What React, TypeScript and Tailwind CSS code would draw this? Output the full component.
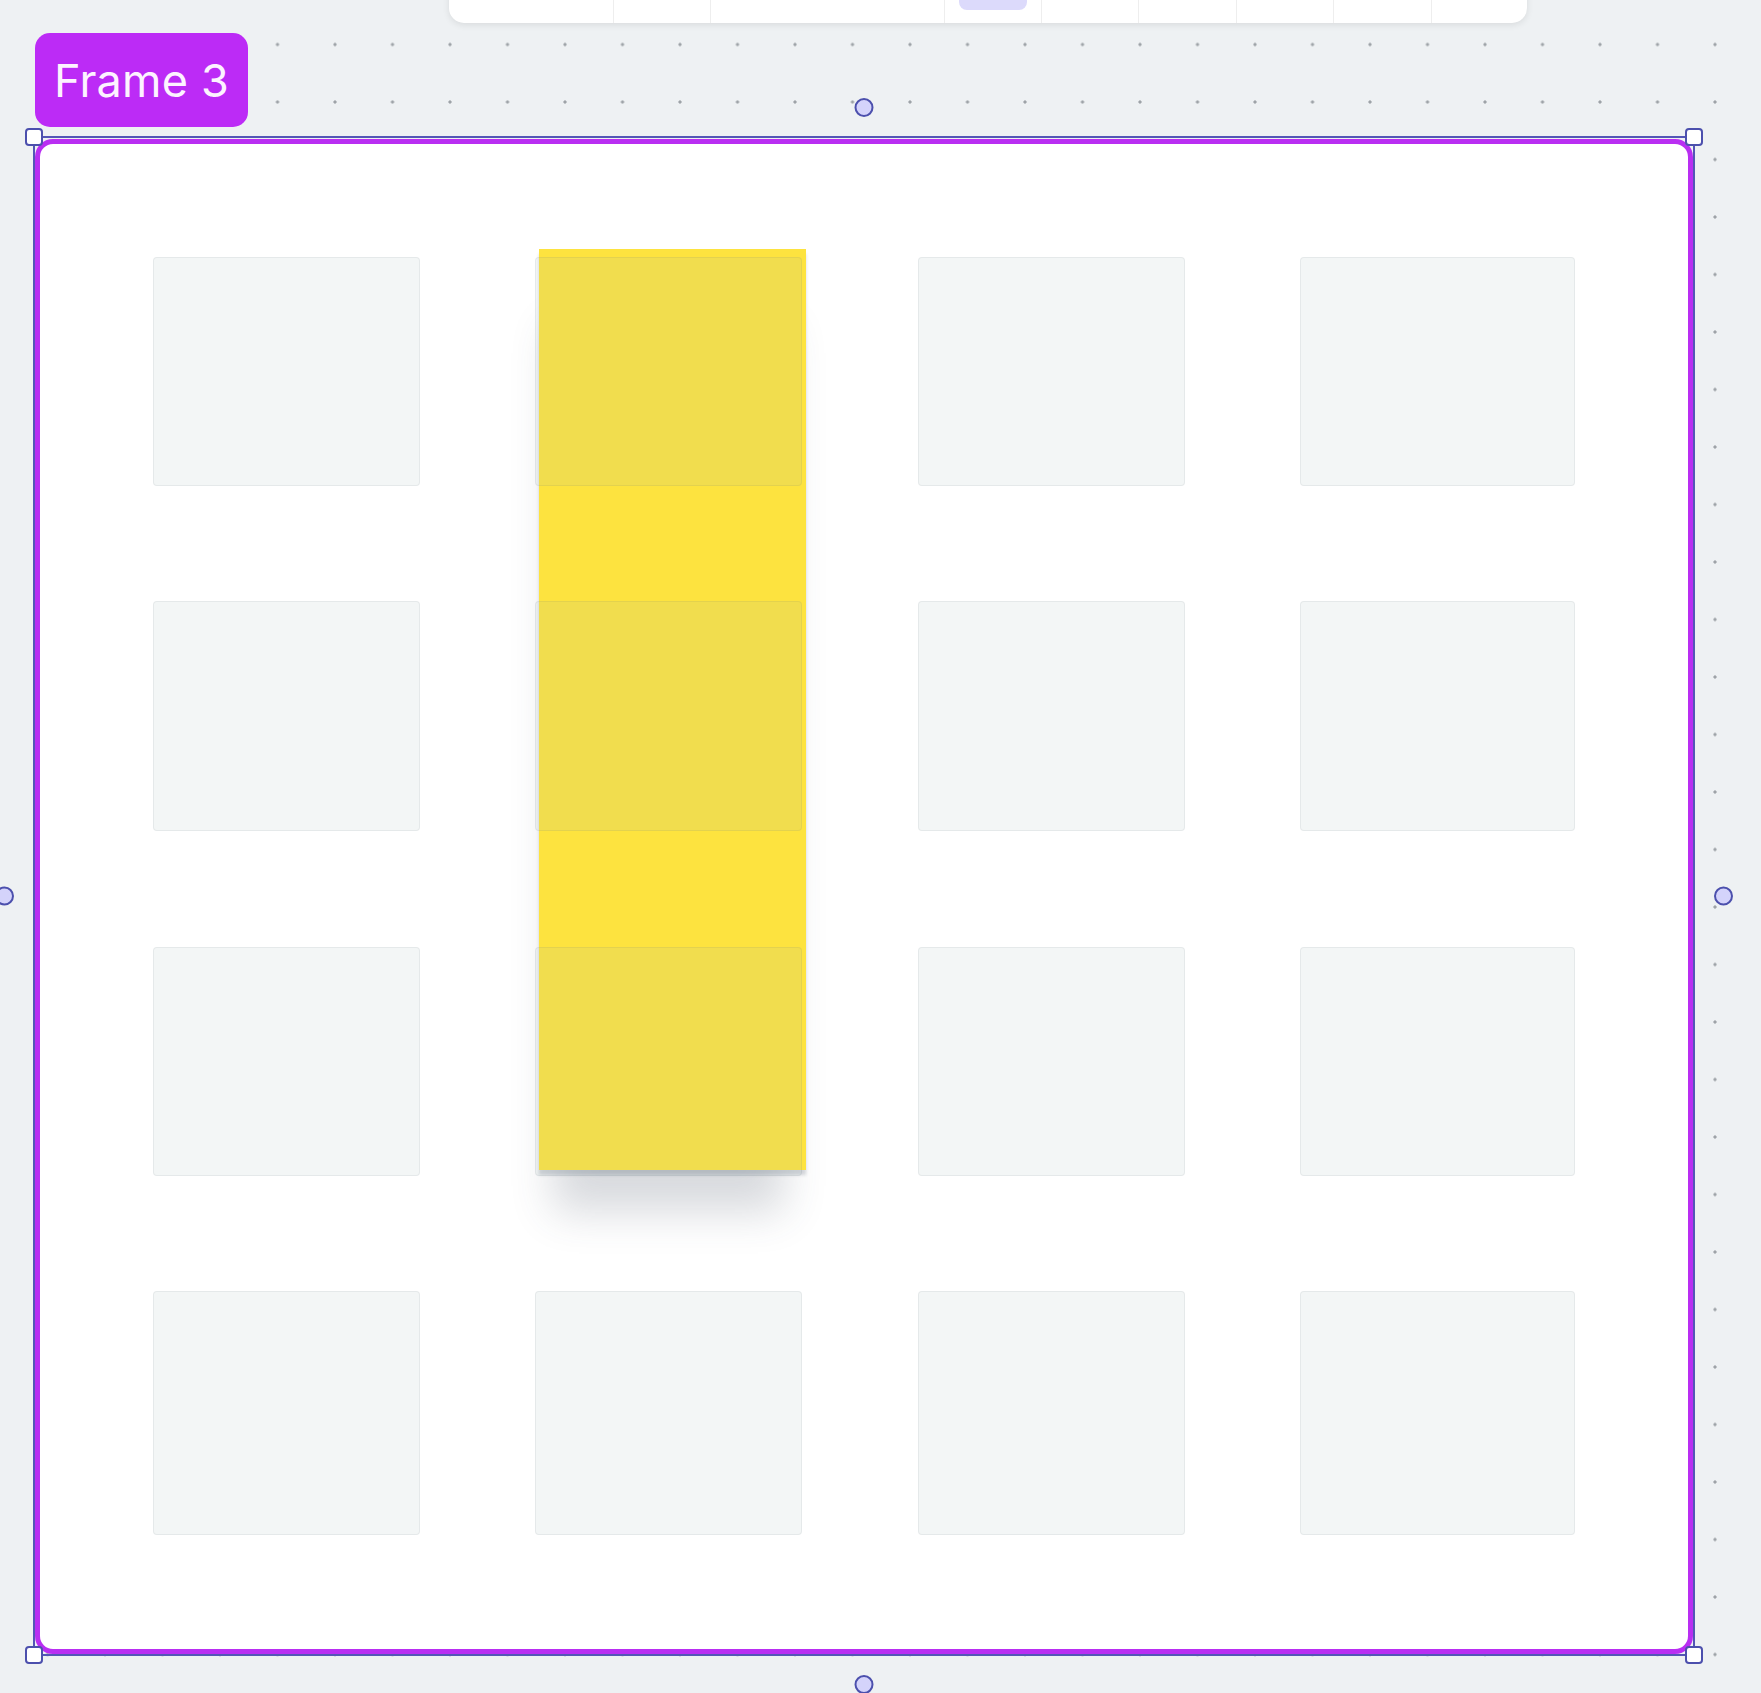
import { FC } from "react";

const toolbarSegments = [164, 97, 234, 97, 97, 98, 97, 98, 96];

const Cell: FC = () => (
  <div className="rounded-[4px] border border-[rgba(40,60,70,0.07)] bg-[rgba(160,182,186,0.13)]" />
);

const CornerHandle: FC<{ className: string }> = ({ className }) => (
  <div
    className={`absolute h-[18px] w-[18px] rounded-[4px] border-2 border-[#4c50ad] bg-white ${className}`}
  />
);

const EdgeHandle: FC<{ className: string }> = ({ className }) => (
  <div
    className={`absolute h-[19px] w-[19px] rounded-full border-2 border-[#4c50ad] bg-[#d4d3fb] ${className}`}
  />
);

const App: FC = () => {
  return (
    <div className="relative h-[1693px] w-[1761px] overflow-hidden bg-[#eef1f3] bg-[radial-gradient(circle,#9ea3a8_1.3px,transparent_1.9px)] bg-size-[57.5px_57.5px] bg-position-[18.75px_15.75px] font-['Inter','Noto_Sans',sans-serif]">
      {/* top toolbar, mostly scrolled off */}
      <div className="absolute left-[449px] top-[-40px] flex h-[63px] overflow-hidden rounded-[15px] bg-white shadow-[0_2px_7px_rgba(0,0,0,0.09)]">
        {toolbarSegments.map((w, i) => (
          <div
            key={i}
            className={`relative h-full ${i > 0 ? "border-l-[1.5px] border-[#eeeeee]" : ""}`}
            style={{ width: w }}
          >
            {i === 3 && (
              <div className="absolute left-[14px] top-[20px] h-[30px] w-[68px] rounded-[8px] bg-[#dcdafb]" />
            )}
          </div>
        ))}
      </div>

      {/* frame group on the canvas */}
      <div className="absolute left-[33px] top-[33px] flex flex-col gap-[9px]">
        <div className="ml-[2px] flex h-[94px] w-[213px] items-center justify-center rounded-[15px] bg-[#bc2bf6]">
          <span className="text-[45px] leading-none tracking-[0.2px] text-[#fdf3ff]">Frame 3</span>
        </div>

        {/* selection box */}
        <div className="relative h-[1520px] w-[1662px] border-2 border-[#5356b6] pt-px">
          <div className="relative h-[1515px] w-[1658px] rounded-[18px] border-[5px] border-[#b92ef2] bg-white pl-[113px] pt-[113px]">
            {/* sticky note */}
            <div className="absolute left-[499px] top-[105px] h-[921px] w-[267px] bg-[#fde33f] shadow-[0_5px_3px_rgba(60,70,90,0.2),-4px_60px_40px_-18px_rgba(60,70,90,0.2)]" />
            <div className="relative grid grid-cols-[267px_267px_267px_275px] grid-rows-[229px_230px_229px_244px] gap-x-[115.4px] gap-y-[115.4px]">
              {Array.from({ length: 16 }).map((_, i) => (
                <Cell key={i} />
              ))}
            </div>
          </div>

          <CornerHandle className="-left-[10px] -top-[10px]" />
          <CornerHandle className="-right-[10px] -top-[10px]" />
          <CornerHandle className="-bottom-[10px] -left-[10px]" />
          <CornerHandle className="-bottom-[10px] -right-[10px]" />
          <EdgeHandle className="-top-[40px] left-1/2 -translate-x-1/2" />
          <EdgeHandle className="-bottom-[40px] left-1/2 -translate-x-1/2" />
          <EdgeHandle className="-left-[40px] top-1/2 -translate-y-1/2" />
          <EdgeHandle className="-right-[40px] top-1/2 -translate-y-1/2" />
        </div>
      </div>
    </div>
  );
};

export default App;
